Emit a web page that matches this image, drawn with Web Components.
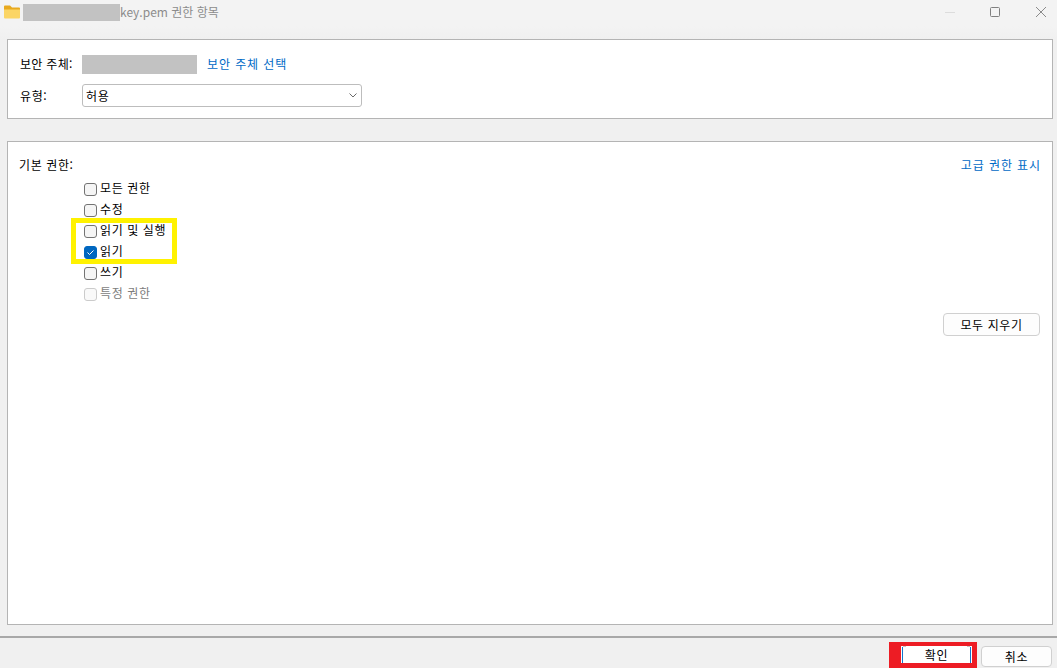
<!DOCTYPE html>
<html lang="ko">
<head>
<meta charset="utf-8">
<title>권한 항목</title>
<style>
html, body { margin: 0; height: 100%; overflow: hidden; }
body { background: #f0f0f0; font: 12px "Noto Sans CJK KR", "Noto Sans", sans-serif; color: #000; }
</style>
</head>
<body>
<perm-dialog></perm-dialog>
<script>
"use strict";
const FONT = `"Noto Sans CJK KR", "Noto Sans", sans-serif`;

class TitleBar extends HTMLElement {
    constructor() {
        super();
        this.attachShadow({ mode: "open" }).innerHTML = `
        <style>
        :host { display:flex; height:39px; box-sizing:border-box; padding:4px 11px 0 4px; align-items:flex-start;
            background:linear-gradient(#f3f3f3 0, #f3f3f3 26px, #f0f0f0 39px); }
        .folder { width:16px; height:14px; margin-top:1px; flex:none; }
        .redact { width:97px; height:17px; margin-left:3px; background:#c2c2c2; flex:none; }
        .text { font:12px/16px ${FONT}; color:#8c8c8c; white-space:nowrap; flex:1; }
        .ctrl { display:flex; gap:35px; margin-top:3px; }
        .ctrl svg { width:10px; height:10px; display:block; fill:none; }
        .ctrl svg:last-child { margin-left:1px; }
        </style>
        <svg class="folder" viewBox="0 0 16 14">
            <path d="M0 1.5Q0 .5 1 .5H6L8 2.5H15Q16 2.5 16 3.5V6H0Z" fill="#e8a91e"/>
            <path d="M0 4.5H16V12.5Q16 13.5 15 13.5H1Q0 13.5 0 12.5Z" fill="#fbd565"/>
        </svg>
        <div class="redact"></div>
        <div class="text"><slot></slot></div>
        <div class="ctrl">
            <svg viewBox="0 0 10 10"><path d="M0 5.5H10" stroke="#dcdcdc"/></svg>
            <svg viewBox="0 0 10 10"><rect x=".5" y=".5" width="9" height="9" rx="1" stroke="#808080"/></svg>
            <svg viewBox="0 0 10 10"><path d="M0 0L10 10M10 0L0 10" stroke="#8a8a8a"/></svg>
        </div>`;
    }
}
customElements.define("title-bar", TitleBar);

class PanelBox extends HTMLElement {
    constructor() {
        super();
        this.attachShadow({ mode: "open" }).innerHTML = `
        <style>
        :host { display:block; box-sizing:border-box; margin:0 4px 0 7px; background:#fff; border:1px solid #b4b4b4; }
        </style>
        <slot></slot>`;
    }
}
customElements.define("panel-box", PanelBox);

class LinkText extends HTMLElement {
    constructor() {
        super();
        this.attachShadow({ mode: "open" }).innerHTML = `
        <style>
        :host { display:inline-block; color:#006ac6; font:12px/16px ${FONT}; letter-spacing:.9px; white-space:nowrap; }
        </style>
        <slot></slot>`;
    }
}
customElements.define("link-text", LinkText);

class SelectBox extends HTMLElement {
    constructor() {
        super();
        this.attachShadow({ mode: "open" }).innerHTML = `
        <style>
        :host { display:flex; align-items:center; justify-content:space-between; box-sizing:border-box;
            width:280px; height:23px; padding:0 4px 0 3px; background:#fff; border:1px solid #bdbdbd; border-radius:3px;
            font:12px/16px ${FONT}; letter-spacing:.6px; color:#000; }
        svg { width:8px; height:5px; fill:none; stroke:#6a6a6a; }
        </style>
        <span><slot></slot></span>
        <svg viewBox="0 0 8 5"><path d="M.5 .5L4 4L7.5 .5"/></svg>`;
    }
}
customElements.define("select-box", SelectBox);

class PermCheck extends HTMLElement {
    constructor() {
        super();
        const checked = this.hasAttribute("checked");
        const disabled = this.hasAttribute("disabled");
        this.attachShadow({ mode: "open" }).innerHTML = `
        <style>
        :host { display:flex; align-items:center; gap:3px; height:21px; font:12px/16px ${FONT}; letter-spacing:.6px;
            color:${disabled ? "#7d7d7d" : "#000"}; white-space:nowrap; }
        span { margin-top:-2px; }
        .box { width:13px; height:13px; box-sizing:border-box; margin-top:2px; border-radius:3px; flex:none;
            background:${checked ? "#0067c0" : disabled ? "#f9f9f9" : "#f5f5f5"};
            border:1px solid ${checked ? "#0067c0" : disabled ? "#cbcbcb" : "#737373"};
            display:flex; align-items:center; justify-content:center; }
        svg { width:7px; height:5px; fill:none; stroke:#fff; stroke-width:1; display:${checked ? "block" : "none"}; }
        </style>
        <div class="box"><svg viewBox="0 0 7 5"><path d="M.5 2.5L2.5 4.5L6.5 .5"/></svg></div>
        <span><slot></slot></span>`;
    }
}
customElements.define("perm-check", PermCheck);

class WinButton extends HTMLElement {
    constructor() {
        super();
        const focus = this.hasAttribute("focused");
        this.attachShadow({ mode: "open" }).innerHTML = `
        <style>
        :host { display:flex; align-items:center; justify-content:center; box-sizing:border-box; height:${focus ? 17 : 21}px;
            font:12px/16px ${FONT}; letter-spacing:.6px; color:#000; white-space:nowrap;
            ${focus
                ? `background:linear-gradient(#c4c4c4,#c4c4c4) 2px top/3px 1px no-repeat,
                    linear-gradient(#c4c4c4,#c4c4c4) right 2px top/3px 1px no-repeat,
                    linear-gradient(#1274cc,#1274cc) left 1px top 1px/1px 100% no-repeat,
                    linear-gradient(#1274cc,#1274cc) right 1px top 1px/1px 100% no-repeat, #fff;`
                : `background:#fdfdfd; border:1px solid #d0d0d0; border-radius:4px;`} }
        </style>
        <slot></slot>`;
    }
}
customElements.define("win-button", WinButton);

// 스크린샷 위에 그려진 강조 표시
class AnnoBox extends HTMLElement {
    constructor() {
        super();
        this.attachShadow({ mode: "open" }).innerHTML = `
        <style>
        :host { display:block; position:absolute; box-sizing:border-box; pointer-events:none; border-style:solid; }
        </style>`;
    }
}
customElements.define("anno-box", AnnoBox);

class PermDialog extends HTMLElement {
    constructor() {
        super();
        this.attachShadow({ mode: "open" }).innerHTML = `
        <style>
        :host { display:flex; flex-direction:column; height:668px; position:relative; font:12px/16px ${FONT}; }
        .top { height:78px; display:grid; grid-template-columns:62px 1fr; grid-template-rows:19px 23px; row-gap:10px;
            align-items:center; padding:15px 11px 0 12px; box-sizing:border-box; }
        .label { letter-spacing:.6px; }
        .who-label { letter-spacing:.3px; margin-top:-2px; }
        .who { display:flex; align-items:center; gap:10px; }
        .who link-text { margin-top:-2px; }
        .redact { width:115px; height:19px; background:#c2c2c2; }
        .main { margin-top:22px; height:484px; padding:15px 12px 0 11px; box-sizing:border-box; }
        .head { display:flex; justify-content:space-between; height:16px; margin-bottom:5px; }
        .head link-text { margin-right:-1px; }
        .checks { display:flex; flex-direction:column; padding-left:65px; }
        .clear { display:flex; justify-content:flex-end; margin-top:9px; }
        .clear win-button { width:97px; height:23px; }
        footer { margin-top:11px; flex:1; border-top:2px solid #a8a8a8; display:flex; justify-content:flex-end;
            gap:9px; padding:8px 5px 0 0; align-items:flex-start; }
        footer win-button { width:71px; }
        .yellow { left:71px; top:218px; width:106px; height:46px; border-width:5px; border-color:#fff200; }
        .red { left:889px; top:642px; width:88px; height:26px; border-width:4px 5px 5px 12px; border-color:#ed1c24; }
        </style>
        <title-bar>key.pem 권한 항목</title-bar>
        <panel-box>
            <div class="top">
                <span class="who-label">보안 주체:</span>
                <div class="who"><div class="redact"></div><link-text>보안 주체 선택</link-text></div>
                <span class="label">유형:</span>
                <select-box>허용</select-box>
            </div>
        </panel-box>
        <panel-box class="main">
            <div class="head"><span class="label">기본 권한:</span><link-text>고급 권한 표시</link-text></div>
            <div class="checks">
                <perm-check>모든 권한</perm-check>
                <perm-check>수정</perm-check>
                <perm-check>읽기 및 실행</perm-check>
                <perm-check checked>읽기</perm-check>
                <perm-check>쓰기</perm-check>
                <perm-check disabled>특정 권한</perm-check>
            </div>
            <div class="clear"><win-button>모두 지우기</win-button></div>
        </panel-box>
        <footer>
            <win-button focused>확인</win-button>
            <win-button>취소</win-button>
        </footer>
        <anno-box class="yellow"></anno-box>
        <anno-box class="red"></anno-box>`;
    }
}
customElements.define("perm-dialog", PermDialog);
</script>
</body>
</html>
